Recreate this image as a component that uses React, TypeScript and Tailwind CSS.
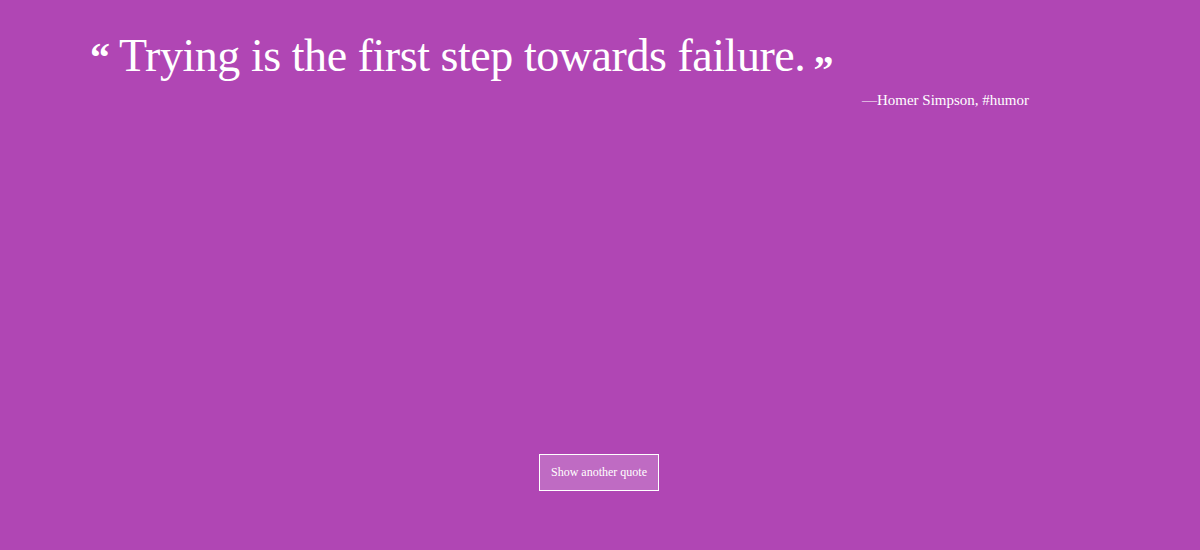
import React from 'react';

const quote = {
  text: 'Trying is the first step towards failure.',
  author: 'Homer Simpson',
  tag: '#humor',
};

const App: React.FC = () => {
  return (
    <div
      className="min-h-[550px] w-full bg-[#b046b4] text-white flex flex-col"
      style={{ fontFamily: '"Liberation Serif", "DejaVu Serif", serif' }}
    >
      <div className="pl-[90px] pr-[171px] pt-[28px]">
        <blockquote className="flex items-start">
          <span className="text-[40px] leading-none font-bold mt-[10px] mr-[9px]">&ldquo;</span>
          <span className="text-[46px] leading-[56px] tracking-[-0.45px]">{quote.text}</span>
          <span className="text-[40px] leading-none font-bold mt-[22px] ml-[8px]">&rdquo;</span>
        </blockquote>
        <p className="text-right text-[15px] -mt-[1px]">
          &mdash;{quote.author}, {quote.tag}
        </p>
      </div>
      <div className="flex justify-center mt-[342px]">
        <button className="w-[120px] h-[37px] border border-white bg-white/20 text-[12px] text-white -ml-[2px]">
          Show another quote
        </button>
      </div>
    </div>
  );
};

export default App;
